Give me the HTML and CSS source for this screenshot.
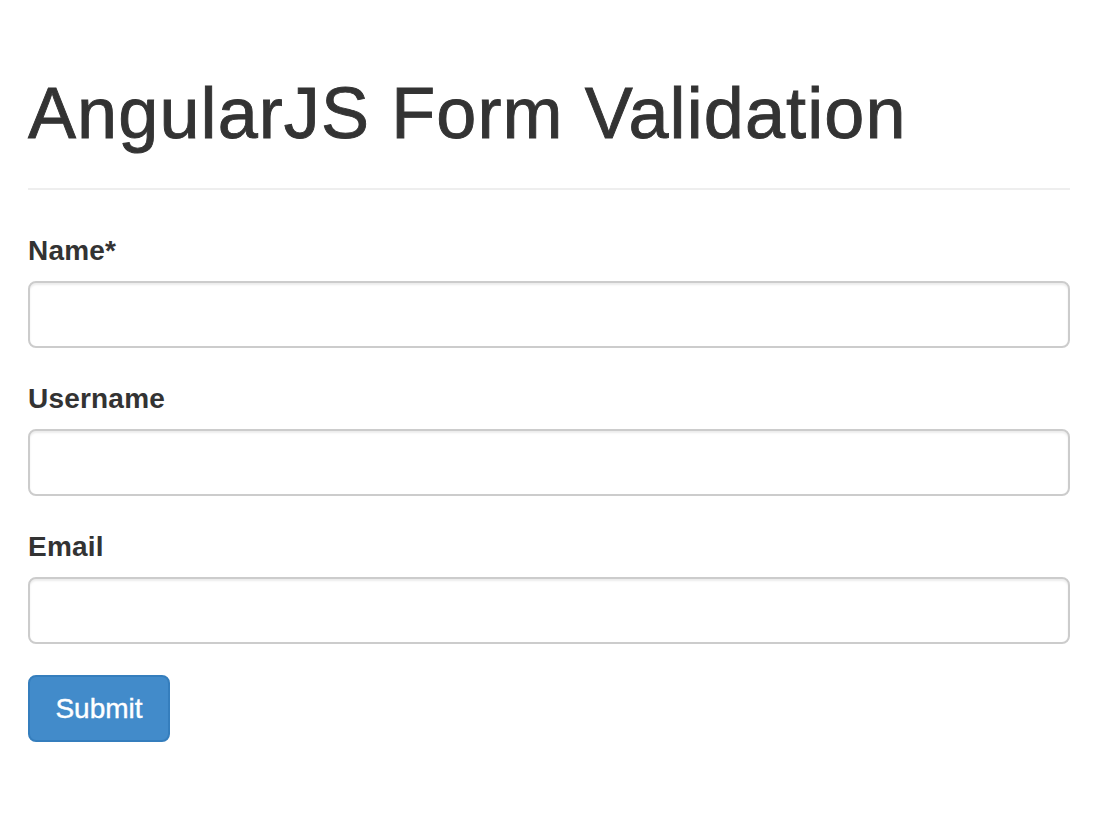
FILE: index.html
```html
<!DOCTYPE html>
<html lang="en">
<head>
<meta charset="utf-8">
<title>AngularJS Form Validation</title>
<link rel="stylesheet" href="styles.css">
</head>
<body>
<div class="container">
  <div class="page-header">
    <h1>AngularJS Form Validation</h1>
  </div>
  <form class="form" novalidate>
    <div class="form-group">
      <label class="label" for="name">Name*</label>
      <input class="form-control" id="name" type="text">
    </div>
    <div class="form-group">
      <label class="label" for="username">Username</label>
      <input class="form-control" id="username" type="text">
    </div>
    <div class="form-group">
      <label class="label" for="email">Email</label>
      <input class="form-control" id="email" type="email">
    </div>
    <button class="btn-primary" type="submit">Submit</button>
  </form>
</div>
</body>
</html>
```

FILE: styles.css
```css
* { box-sizing: border-box; }

html, body {
  margin: 0;
  padding: 0;
  background: #fff;
}

body {
  font-family: "Liberation Sans", Arial, Helvetica, sans-serif;
  color: #333;
}

.container {
  padding: 73px 30px 0 28px;
}

.page-header {
  padding-bottom: 35px;
  border-bottom: 2px solid #eee;
  margin-bottom: 41px;
}

.page-header h1 {
  margin: 0;
  font-size: 72px;
  line-height: 80px;
  font-weight: normal;
  letter-spacing: 1.1px;
  -webkit-text-stroke: 0.9px #333;
  color: #333;
}

.form {
  display: flex;
  flex-direction: column;
  align-items: flex-start;
}

.form-group {
  width: 100%;
  display: flex;
  flex-direction: column;
  margin-bottom: 31px;
}

.label {
  font-size: 28px;
  line-height: 40px;
  font-weight: bold;
  letter-spacing: 0.2px;
  margin-bottom: 10px;
  color: #333;
}

.form-control {
  width: 100%;
  height: 67px;
  border: 2px solid #ccc;
  border-radius: 8px;
  box-shadow: inset 0 2px 2px rgba(0, 0, 0, 0.075);
  padding: 12px 24px;
  font-family: inherit;
  font-size: 28px;
  color: #555;
  background: #fff;
  outline: none;
}

.btn-primary {
  width: 142px;
  height: 67px;
  padding: 0;
  font-family: inherit;
  font-size: 28px;
  line-height: 40px;
  -webkit-text-stroke: 0.4px #fff;
  color: #fff;
  background: #428bca;
  border: 2px solid #357ebd;
  border-radius: 8px;
  cursor: pointer;
}
```
